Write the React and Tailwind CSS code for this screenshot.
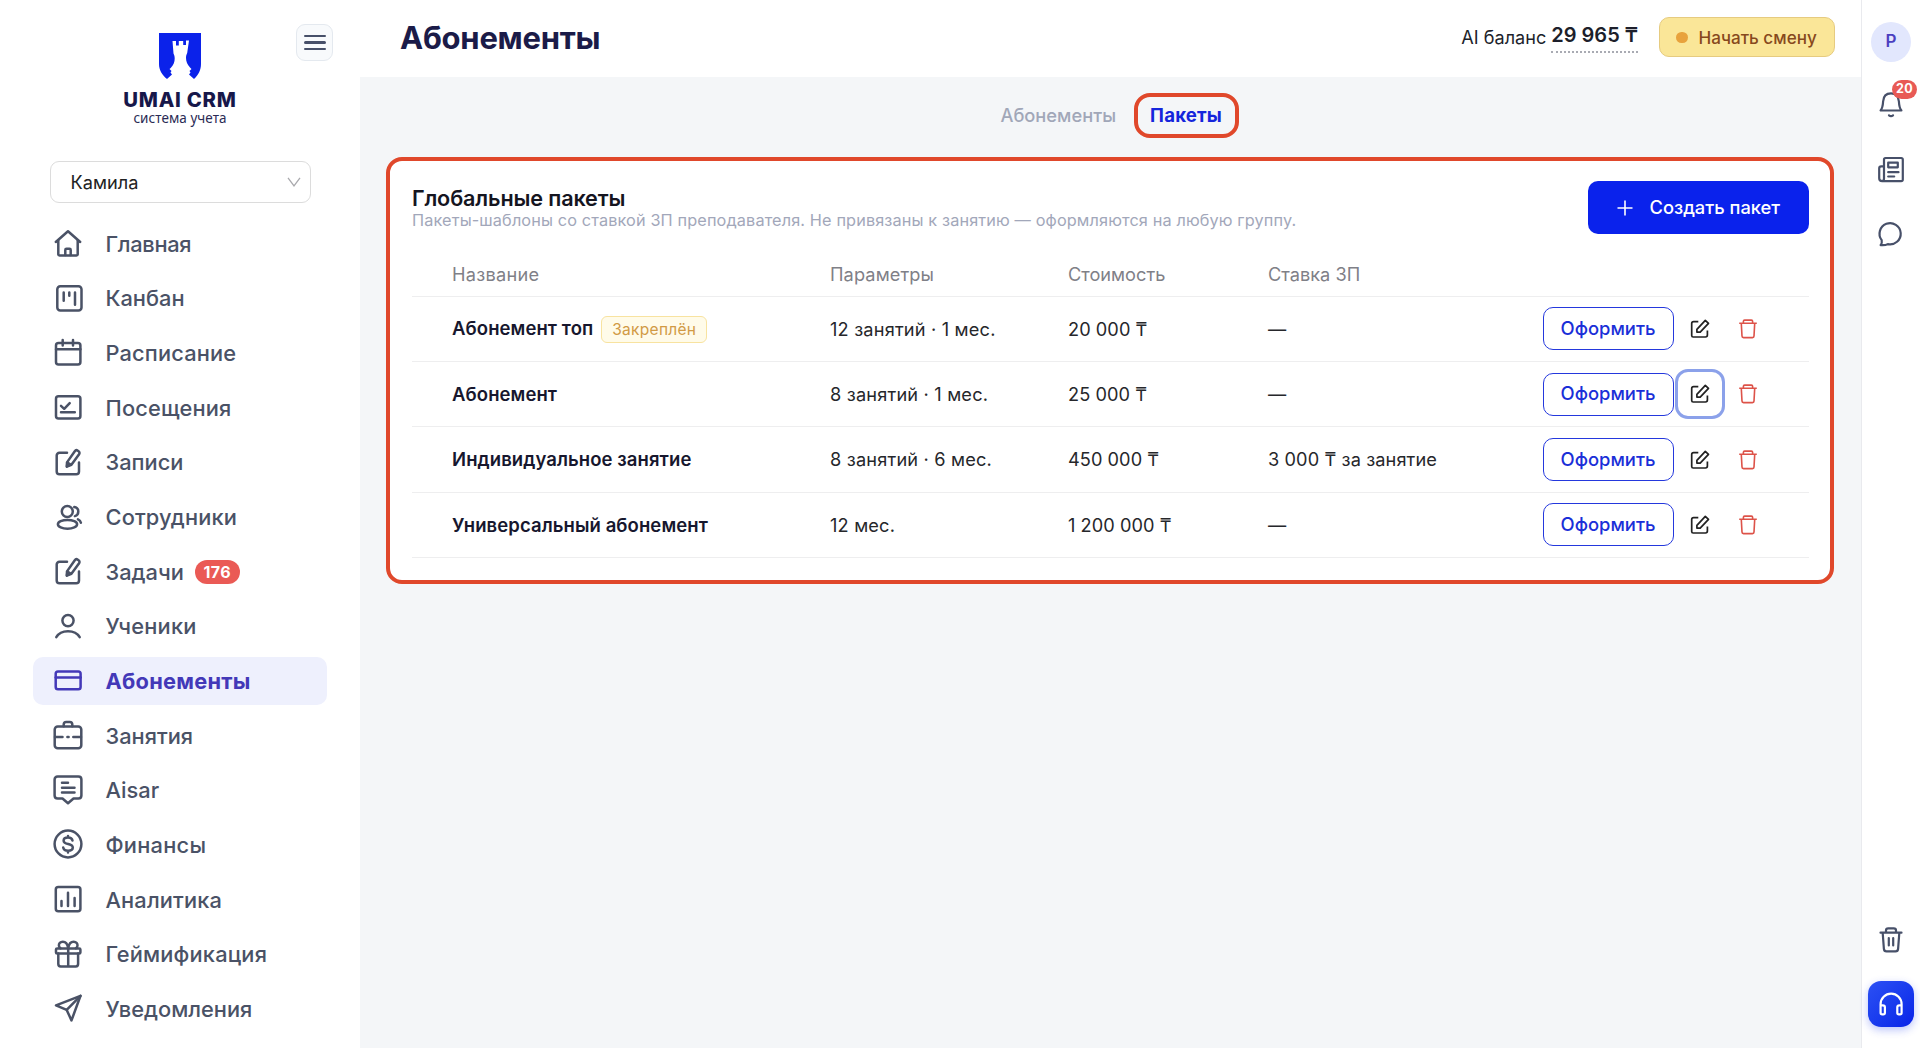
import clsx from "clsx";

const icons = {
  home: (
    <>
      <path d="M1.8 12 14 1.2 26.2 12" />
      <path d="M4.3 10.5v13.7c0 .7.5 1.2 1.2 1.2h17c.7 0 1.2-.5 1.2-1.2V10.5" />
      <path d="M11.3 25v-5c0-.7.5-1.2 1.2-1.2h3c.7 0 1.2.5 1.2 1.2v5" />
    </>
  ),
  kanban: (
    <>
      <rect x="3.3" y="1.2" width="24.2" height="24.2" rx="3" />
      <path d="M9.7 7.5v8.3M15.3 7.5v3.2M21 7.5v12.3" />
    </>
  ),
  calendar: (
    <>
      <rect x="2" y="4" width="24.4" height="21.5" rx="2.5" />
      <path d="M2 10.3h24.4M8.7 1v5.5M19 1v5.5" />
    </>
  ),
  visits: (
    <>
      <rect x="2" y="2.2" width="24.4" height="22.2" rx="2.5" />
      <path d="m7 11.8 3.2 3 5.5-5.6M7 18.3h13.8" />
    </>
  ),
  edit: (
    <>
      <path d="M13 3.8H5.5c-1.7 0-2.8 1.1-2.8 2.8v15.8c0 1.7 1.1 2.8 2.8 2.8h16.7c1.7 0 2.8-1.1 2.8-2.8v-9" />
      <path d="M13 13.4 20.8 2.2c.7-1 2-1.2 3-.5l.8.6c1 .7 1.2 2 .5 3L17.4 15.8l-4.6 1.8z" />
      <path d="m13.5 13.6-.6 3.8 3.6-1.9z" fill="currentColor" />
    </>
  ),
  staff: (
    <>
      <circle cx="13.3" cy="8.5" r="5.5" />
      <ellipse cx="13.5" cy="21.3" rx="9.6" ry="4.4" />
      <path d="M20.3 4c2.4.4 4 2.3 4 4.6s-1.4 4-3.4 4.5M24 16.3c1.5.6 2.6 1.8 2.9 3.4" />
    </>
  ),
  pupil: (
    <>
      <circle cx="14" cy="7.6" r="5.6" />
      <path d="M2.3 24.2C4.5 20.3 9 18.2 14 18.2s9.5 2.1 11.7 6" />
    </>
  ),
  card: (
    <>
      <rect x="1.7" y="4.5" width="24.9" height="17.7" rx="2.3" />
      <path d="M1.7 10.6h24.9" />
    </>
  ),
  briefcase: (
    <>
      <rect x=".7" y="4.5" width="26.6" height="21.7" rx="3" />
      <path d="M9.7 4.3V2.6C9.7 1 10.6 0 12.2 0h3.6c1.6 0 2.5 1 2.5 2.6v1.7M1 15h7.5M13.4 15h1.2M19.3 15H27" />
    </>
  ),
  message: (
    <>
      <path d="M3.6-.5h20.8c1.8 0 3 1.2 3 3v16c0 1.8-1.2 3-3 3H19.5L14 26.3l-5.5-4.8H3.6c-1.8 0-3-1.2-3-3v-16c0-1.800 1.2-3 3-3z" />
      <path d="M8 5.8h6M8 10.7h12.5M8 15.5h12.5" />
    </>
  ),
  finance: (
    <>
      <circle cx="14" cy="13" r="13.4" />
      <path d="M18.5 9.6c-.4-1.9-2.1-3-4.5-3s-4.4 1.1-4.4 3.1c0 4.5 9.2 2.2 9.2 6.8 0 2-2 3.2-4.7 3.2-2.6 0-4.5-1.1-4.9-3.2M14 5v1.6M14 19.7v1.7" />
    </>
  ),
  analytics: (
    <>
      <rect x="1.8" y="1" width="24.6" height="24.3" rx="2.5" />
      <path d="M7.5 15v5M14 6.7V20M20.6 12v8" />
    </>
  ),
  gift: (
    <>
      <rect x="2" y="7.4" width="24.4" height="5.2" rx="1.2" />
      <path d="M4.3 12.6V23c0 1.5.9 2.4 2.4 2.4h15c1.5 0 2.4-.9 2.4-2.4V12.6M14.2 7.4v18" />
      <path d="M14.2 7.2C13.5 3 11.5.8 8.8.8 6.2.8 4.7 2.5 4.9 4.7c.1 1.1.7 2 1.6 2.6M14.2 7.2C14.9 3 16.9.8 19.6.8c2.6 0 4.1 1.7 3.9 3.9-.1 1.1-.7 2-1.6 2.6" />
    </>
  ),
  send: (
    <>
      <path d="m2 10.4 24.5-9.6-9 24.6-4.8-10.5z" />
      <path d="M12.7 14.9 26.5.8" />
    </>
  ),
};

const NavIcon = ({ name }) => (
  <svg
    viewBox="0 0 28 28"
    className="size-7 shrink-0 overflow-visible"
    fill="none"
    stroke="currentColor"
    strokeWidth="2.5"
    strokeLinecap="round"
    strokeLinejoin="round"
  >
    {icons[name]}
  </svg>
);

const menu = [
  { icon: "home", label: "Главная", className: "tracking-[-0.3px]" },
  { icon: "kanban", label: "Канбан" },
  { icon: "calendar", label: "Расписание", className: "tracking-[0.15px]" },
  { icon: "visits", label: "Посещения", className: "tracking-[0.15px]" },
  { icon: "edit", label: "Записи" },
  { icon: "staff", label: "Сотрудники", className: "tracking-[0.15px]" },
  { icon: "edit", label: "Задачи", badge: "176" },
  { icon: "pupil", label: "Ученики", className: "tracking-[0.25px]" },
  { icon: "card", label: "Абонементы", active: true, className: "tracking-[0.25px]" },
  { icon: "briefcase", label: "Занятия" },
  { icon: "message", label: "Aisar" },
  { icon: "finance", label: "Финансы", className: "tracking-[0.25px]" },
  { icon: "analytics", label: "Аналитика", className: "tracking-[0.15px]" },
  { icon: "gift", label: "Геймификация", className: "tracking-[0.2px]" },
  { icon: "send", label: "Уведомления" },
];

const packages = [
  { name: "Абонемент топ", pinned: true, params: "12 занятий · 1 мес.", price: "20 000 ₸", rate: "—" },
  { name: "Абонемент", params: "8 занятий · 1 мес.", price: "25 000 ₸", rate: "—", focused: true },
  { name: "Индивидуальное занятие", params: "8 занятий · 6 мес.", price: "450 000 ₸", rate: "3 000 ₸ за занятие" },
  { name: "Универсальный абонемент", params: "12 мес.", price: "1 200 000 ₸", rate: "—" },
];

const Logo = () => (
  <div className="flex flex-col items-center">
    <svg viewBox="0 0 42 46" className="h-[46px] w-[42px]">
      <path
        d="M0 0h42v31c0 6-2.5 11-7 15l-5-4.5 1.5-2-1-1.5 2-2-1.5-1.5c-2.6-3-4-6-4-9.5 0-2 .4-3.5 1.200-5l1.800-12.500h-3v4.500h-2.800V8h-4.400v4.500H17V8h-3.500l1 12.500c.8 1.500 1.200 3 1.200 5 0 3.500-1.200 6.500-4 9.500L10.500 36l2 2-1 1.500 1.500 2L8 46C3 42 0 37 0 31z"
        fill="#0b22ea"
      />
    </svg>
    <p className="mt-[9px] text-[20.3px] leading-6 font-extrabold tracking-[0.75px] whitespace-nowrap text-[#17174a]">
      UMAI CRM
    </p>
    <p className="-mt-[2px] font-['Noto_Sans',sans-serif] text-[13.5px] leading-4 tracking-[0.05px] whitespace-nowrap text-[#2b2b55]">
      система учета
    </p>
  </div>
);

const MenuItem = ({ icon, label, badge, active, className }) => (
  <a
    className={clsx(
      "flex h-[47.67px] items-center rounded-[10px] pl-[21px] text-[21.8px]",
      active ? "bg-[#eef0fd] font-bold text-[#4338b8]" : "font-[450] text-[#4a5266]",
    )}
  >
    <NavIcon name={icon} />
    <span className={clsx("ml-[23.5px] whitespace-nowrap", className)}>{label}</span>
    {badge && (
      <span className="ml-[11px] flex h-6 w-[45px] items-center justify-center rounded-full bg-[#ea5a55] text-[16px] font-bold tracking-[0.4px] text-white">
        {badge}
      </span>
    )}
  </a>
);

const Sidebar = () => (
  <aside className="flex w-[360px] shrink-0 flex-col bg-white">
    <div className="grid h-[161px] grid-cols-[1fr_120px_1fr] pt-[33px]">
      <span />
      <Logo />
      <button
        type="button"
        aria-label="Меню"
        className="-mt-[9px] ml-[56px] flex size-[37px] flex-col items-center justify-center gap-1 rounded-[9px] border border-[#e4e9ef] bg-[#f8fafc]"
      >
        <span className="h-[2.4px] w-[22px] rounded bg-[#475069]" />
        <span className="h-[2.4px] w-[22px] rounded bg-[#475069]" />
        <span className="h-[2.4px] w-[22px] rounded bg-[#475069]" />
      </button>
    </div>
    <div className="mx-[49.5px] flex h-[42px] items-center justify-between rounded-[9px] border border-[#dcdcdc] pt-px pr-[9px] pl-[20px] text-[18.2px] text-[#222]">
      Камила
      <svg viewBox="0 0 14 10" className="-mt-px h-2.5 w-3.5" fill="none" stroke="#a9a9ad" strokeWidth="1.3">
        <path d="m1 .8 6 8 6-8" />
      </svg>
    </div>
    <nav className="mt-[17.2px] flex flex-col gap-[7px] px-[33px]">
      {menu.map((item) => (
        <MenuItem key={item.label} {...item} />
      ))}
    </nav>
  </aside>
);

const Header = () => (
  <header className="flex h-[76.5px] shrink-0 items-start justify-between bg-white pr-[26.5px] pl-10">
    <h1 className="mt-[17px] text-[31px] leading-[42px] font-bold tracking-[-0.25px] text-[#1b1b48]">
      Абонементы
    </h1>
    <div className="mt-[17px] flex h-10 items-center text-[18.1px] text-[#1d1f2b]">
      <span className="pt-px">AI баланс</span>
      <span className="-mt-[3px] ml-[5px] flex h-[34px] items-start border-b-[2.5px] border-dotted border-[#a9abb3] text-[20px] leading-[33px] font-semibold">
        29 965 ₸
      </span>
      <button
        type="button"
        className="ml-[21px] flex h-10 w-[175.5px] items-center rounded-[10px] border-[1.5px] border-[#e6cb80] bg-[#fae698] pt-px pl-4 text-[17.1px] font-medium text-[#87491d]"
      >
        <span className="mr-[11px] size-[11.5px] rounded-full bg-[#e8a23c]" />
        Начать смену
      </button>
    </div>
  </header>
);

const EditIcon = () => (
  <svg viewBox="0 0 20 20" className="size-5" fill="none" stroke="#222" strokeWidth="1.7" strokeLinejoin="round">
    <path d="M8.3 2.7H3.6c-1.1 0-1.9.8-1.9 1.9v12c0 .8.6 1.4 1.4 1.4h12.4c1.1 0 1.9-.8 1.9-1.9v-4.6" />
    <path d="m6.9 10.3 8.4-9 3.2 3.1-8.3 8.7H6.9z" />
  </svg>
);

const DeleteIcon = () => (
  <svg viewBox="0 0 20 20" className="size-5" fill="none" stroke="#dd5349" strokeWidth="1.6" strokeLinejoin="round">
    <path d="M1.2 4.3h17.6M5.4 4.2V2.3c0-.7.5-1.2 1.2-1.2h6.8c.7 0 1.2.5 1.2 1.2v1.9M3.3 4.5l.7 12.6c0 .9.6 1.5 1.5 1.5h9c.9 0 1.5-.6 1.5-1.5l.7-12.6" />
  </svg>
);

const columns = "grid grid-cols-[418px_238px_200px_274.5px_1fr] border-b border-[#eeeeef]";

const PackageRow = ({ name, pinned, params, price, rate, focused }) => (
  <div className={`${columns} h-[65.4px] items-center text-[#26272b]`}>
    <div className="flex items-center pt-px pl-10 text-[18.5px] font-semibold tracking-[0.08px] whitespace-nowrap text-[#17172e]">
      {name}
      {pinned && (
        <span className="ml-2 flex h-[27px] w-[106px] items-center justify-center rounded-md border border-[#f8e3a0] bg-[#fffbe9] text-[15.5px] font-normal tracking-[0.3px] text-[#d19a45]">
          Закреплён
        </span>
      )}
    </div>
    <span className="pt-px tracking-[0.18px]">{params}</span>
    <span className="pt-px tracking-[0.05px]">{price}</span>
    <span className="pt-px tracking-[0.1px]">{rate}</span>
    <div className="flex items-center">
      <button
        type="button"
        className="h-[43px] w-[131px] rounded-[10px] border-[1.5px] border-[#2438dd] text-[18.4px] font-medium text-[#1a2fd8]"
      >
        Оформить
      </button>
      <button
        type="button"
        aria-label="Изменить"
        className={clsx(
          "ml-[1.5px] flex size-[50px] items-center justify-center rounded-[13px] border-[3px]",
          focused ? "border-[#8ba1ea]" : "border-transparent",
        )}
      >
        <EditIcon />
      </button>
      <button type="button" aria-label="Удалить" className="ml-[13px] flex size-5 items-center">
        <DeleteIcon />
      </button>
    </div>
  </div>
);

const PackagesCard = () => (
  <section className="mr-[27px] ml-[26px] mt-[18px] h-[427.5px] rounded-2xl border-4 border-[#e0482b] bg-white pr-[21px] pl-[22px]">
    <div className="flex h-[92.6px] justify-between pt-5">
      <div className="pt-1">
        <h2 className="text-[21.6px] leading-[26px] font-semibold tracking-[-0.13px] text-[#15151f]">
          Глобальные пакеты
        </h2>
        <p className="mt-[-2px] text-[16.3px] leading-[22px] tracking-[0.12px] text-[#a2a7ba]">
          Пакеты-шаблоны со ставкой ЗП преподавателя. Не привязаны к занятию — оформляются на любую группу.
        </p>
      </div>
      <button
        type="button"
        className="flex h-[53px] w-[221.5px] items-center rounded-[10px] bg-[#0a22ec] pt-px pl-[29.5px] text-[18.3px] font-medium text-white"
      >
        <svg viewBox="0 0 16 16" className="mr-[16.5px] size-4" stroke="#fff" strokeWidth="1.6">
          <path d="M8 .5v15M.5 8h15" />
        </svg>
        Создать пакет
      </button>
    </div>
    <div className="text-[18.2px]">
      <div className={`${columns} h-[43.5px] items-center text-[#7f8087]`}>
        <span className="pl-10 tracking-[0.25px]">Название</span>
        <span className="tracking-[0.1px]">Параметры</span>
        <span>Стоимость</span>
        <span>Ставка ЗП</span>
      </div>
      {packages.map((item) => (
        <PackageRow key={item.name} {...item} />
      ))}
    </div>
  </section>
);

const railIcon = {
  className: "size-7 overflow-visible",
  viewBox: "0 0 28 28",
  fill: "none",
  stroke: "#475069",
  strokeWidth: 2.2,
  strokeLinecap: "round",
  strokeLinejoin: "round",
};

const Rail = () => (
  <aside className="flex w-[59px] shrink-0 flex-col items-center border-l-[1.5px] border-[#e9eaee] bg-white pt-[21.5px]">
    <div className="flex size-10 items-center justify-center rounded-full bg-[#e2e7fd] text-[17px] font-semibold text-[#4b3fc0]">
      P
    </div>
    <div className="relative mt-[29.5px]">
      <svg {...railIcon}>
        <path d="M3.6 19.5h20.8c-2.1-2.6-2.3-5.3-2.5-9-.3-5-3.3-8.1-7.9-8.1s-7.6 3.1-7.9 8.1c-.2 3.7-.4 6.4-2.5 9zM12 24.3c1.2 1 2.8 1 4 0" />
      </svg>
      <span className="absolute -top-[11px] left-[15px] flex h-[19px] w-[25px] items-center justify-center rounded-full bg-[#e85a55] text-[12.5px] font-bold tracking-[0.3px] text-white">
        20
      </span>
    </div>
    <svg {...railIcon} className="mt-[37px] size-7 overflow-visible">
      <path d="M7 3.5C7 2.6 7.6 2 8.5 2h15.7c1 0 1.6.6 1.6 1.5v20c0 1-.7 1.7-1.7 1.7H5.2C3.4 25.2 2.2 24 2.2 22.3V12.5c0-1.3.7-2.1 2-2.1H7zM7 10v12.5c0 1.5-.7 2.5-2 2.7" />
      <path d="M11.2 6.7h9.6v4.6h-9.6zM11.2 16.2h10.3M11.2 20.5h6" />
    </svg>
    <svg {...railIcon} className="mt-[36px] size-7 overflow-visible">
      <path d="M3.6 25.1c1.2-1.600 1.500-3.200 1.100-4.900A10.600 10.600 0 1 1 10.800 24.100c-1.800 1-4.200 1.300-7.200 1z" />
    </svg>
    <svg {...railIcon} className="mt-auto size-7 overflow-visible">
      <path d="M3.5 6.7h21M9 6.4V4.6C9 3.3 9.9 2.4 11.2 2.4h5.6c1.3 0 2.2.9 2.2 2.2v1.8M5.7 7l1.2 15.9c.1 1.6 1 2.5 2.6 2.5h9c1.6 0 2.5-.9 2.6-2.5L22.3 7M11.8 12v7.5M16.2 12v7.5" />
    </svg>
    <button
      type="button"
      aria-label="Поддержка"
      className="mt-[27px] mb-[21px] flex size-[46px] items-center justify-center rounded-[13px] bg-linear-to-br from-[#2c50f4] to-[#0a20e8] shadow-[0_3px_9px_rgba(30,60,240,0.3)]"
    >
      <svg {...railIcon} stroke="#fff">
        <path d="M3.6 22.5v-8.3a10.5 10.5 0 0 1 21 0v8.3M3.6 15.3h2.3c1.2 0 2 .8 2 2v5.5c0 1-.6 1.6-1.6 1.6H5.2c-1 0-1.6-.6-1.6-1.6zM24.6 15.3h-2.3c-1.2 0-2 .8-2 2v5.5c0 1 .6 1.6 1.6 1.6h1.1c1 0 1.6-.6 1.6-1.6z" />
      </svg>
    </button>
  </aside>
);

export default function App() {
  return (
    <div className="flex h-screen overflow-hidden bg-white font-['Inter','Noto_Sans',sans-serif]">
      <Sidebar />
      <main className="flex min-w-0 flex-1 flex-col bg-[#f4f6f8]">
        <Header />
        <div className="mt-4 flex h-[46px] items-center justify-center pl-[18px] text-[18.3px] font-medium text-[#a1a7b8]">
          Абонементы
          <span className="ml-[17.5px] flex h-[45px] w-[105px] items-center justify-center rounded-2xl border-4 border-[#e0482b] text-[18.6px] font-bold tracking-[0.2px] text-[#1526dc]">
            Пакеты
          </span>
        </div>
        <PackagesCard />
      </main>
      <Rail />
    </div>
  );
}
